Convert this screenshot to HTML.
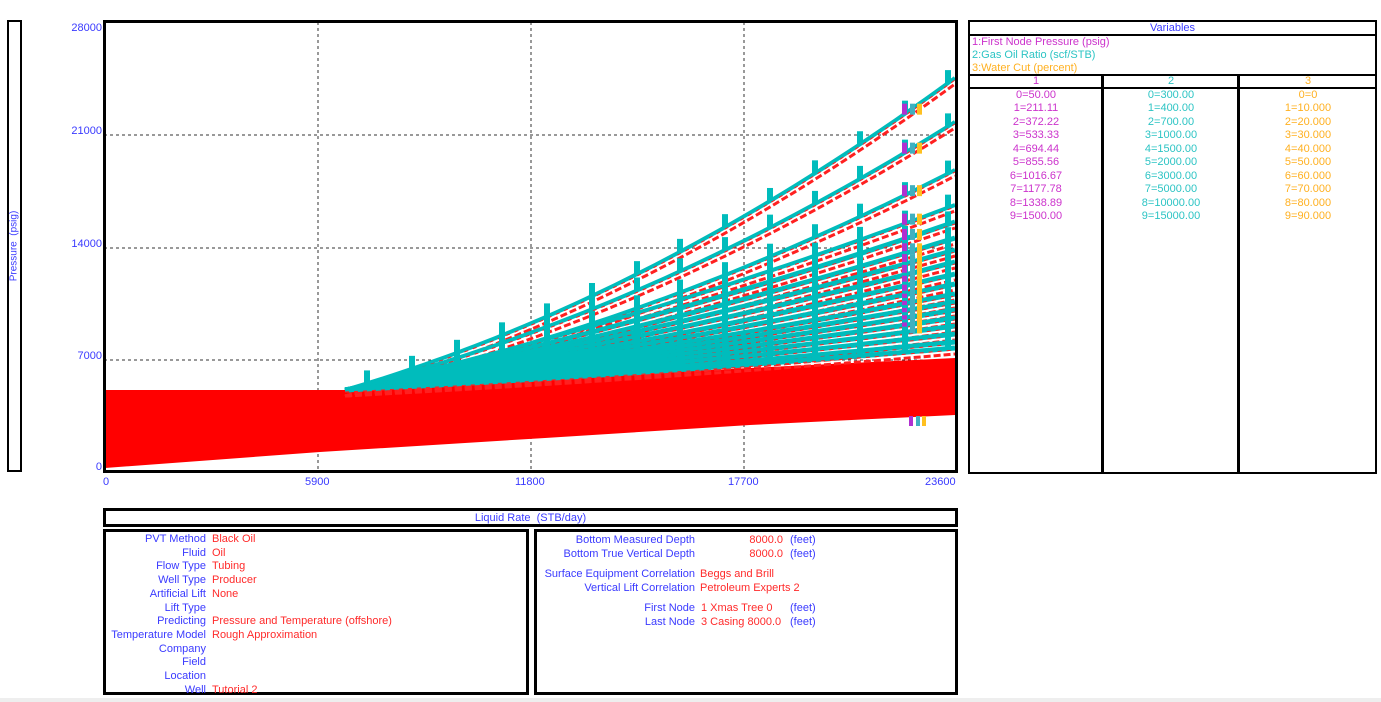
<!DOCTYPE html>
<html><head><meta charset="utf-8"><style>
body{margin:0;width:1381px;height:702px;background:#fff;overflow:hidden;font-family:"Liberation Sans",sans-serif;font-size:11px;position:relative}
.a{position:absolute}
.b{position:absolute;border:2px solid #000;box-sizing:border-box}
.bl{color:#3a3aff}.rd{color:#ff2a2a}.mg{color:#cc33cc}.cy{color:#2cc4c4}.or{color:#ffb020}
.r{text-align:right}
.row{position:absolute;white-space:nowrap;line-height:13px}
</style></head><body>
<div class="b" style="left:7px;top:20px;width:15px;height:452px"></div>
<div class="a bl" style="left:14px;top:246px;transform:translate(-50%,-50%) rotate(-90deg);white-space:nowrap;font-size:10px">Pressure &nbsp;(psig)</div>
<div class="a bl r" style="left:40px;width:62px;top:22px">28000</div>
<div class="a bl r" style="left:40px;width:62px;top:125px">21000</div>
<div class="a bl r" style="left:40px;width:62px;top:238px">14000</div>
<div class="a bl r" style="left:40px;width:62px;top:350px">7000</div>
<div class="a bl r" style="left:40px;width:62px;top:461px">0</div>
<div class="a bl" style="left:103px;top:476px">0</div>
<div class="a bl" style="left:305px;top:476px">5900</div>
<div class="a bl" style="left:515px;top:476px">11800</div>
<div class="a bl" style="left:728px;top:476px">17700</div>
<div class="a bl" style="left:925px;top:476px">23600</div>
<svg class="a" style="left:0;top:0" width="1381" height="702" id="sv">
<g stroke="#333" stroke-dasharray="3,3" stroke-width="1">
<line x1="318" y1="22" x2="318" y2="471"/><line x1="531" y1="22" x2="531" y2="471"/><line x1="744" y1="22" x2="744" y2="471"/>
<line x1="104" y1="135" x2="955" y2="135"/><line x1="104" y1="248" x2="955" y2="248"/><line x1="104" y1="360" x2="955" y2="360"/>
</g>
<polygon fill="#ff0000" points="105,390 345,390 545,378 750,368 955,358 955,415 750,425 545,438 320,452 105,468"/>
<g id="cl"></g>
<rect x="104.5" y="21.5" width="852" height="450" fill="none" stroke="#000" stroke-width="3"/>
</svg>
<script>
var g=document.getElementById('cl'),h='';
var D=[312,268,220,185,168,152,140,128,116,106,96,88,80,72,64,56,48,42];
var mk=[367,412,457,502,547,592,637,680,725,770,815,860,905,948];
function Y(d,x,i){var t=(x-345)/610;var a=i<3?0.57:0.75;return 390-a*d*t-(1-a)*d*t*t;}
function P(d,i,o){var p='';for(var x=345;x<=955;x+=10)p+=(x==345?'M':'L')+x+','+(Y(d,x,i)+o).toFixed(1);return p;}
D.forEach(function(d,i){
h+='<path d="'+P(d,i,6)+'" fill="none" stroke="#ff2020" stroke-width="3" stroke-dasharray="7,3"/>';
h+='<path d="'+P(d,i,0)+'" fill="none" stroke="#00bcbc" stroke-width="'+(i>3?5:4)+'"/>';
h+='<path d="'+P(d,i,2)+'" fill="none" stroke="#ff2020" stroke-width="1" stroke-dasharray="4,5"/>';
mk.forEach(function(x){if(x<360)return;var y=Y(d,x,i);h+='<rect x="'+(x-3)+'" y="'+(y-13)+'" width="6" height="13" fill="#00bcbc"/>';});
if(i<15){var y=Y(d,905,i)-10;h+='<rect x="902" y="'+y+'" width="5" height="11" fill="#b030d0"/><rect x="910" y="'+y+'" width="5" height="11" fill="#40b0c0"/><rect x="917" y="'+y+'" width="5" height="11" fill="#ffc020"/>';}
});
h+='<rect x="909" y="416" width="4" height="10" fill="#b030d0"/><rect x="916" y="416" width="4" height="10" fill="#40b0c0"/><rect x="922" y="416" width="4" height="10" fill="#ffc020"/>';
g.innerHTML=h;
</script>
<div class="b" style="left:968px;top:20px;width:409px;height:454px"></div>
<div class="a" style="left:968px;top:34px;width:409px;border-top:2px solid #000"></div>
<div class="a" style="left:968px;top:74px;width:409px;border-top:2px solid #000"></div>
<div class="a" style="left:968px;top:87px;width:409px;border-top:2px solid #000"></div>
<div class="a" style="left:1101px;top:75px;height:398px;border-left:3px solid #000"></div>
<div class="a" style="left:1237px;top:75px;height:398px;border-left:3px solid #000"></div>
<div class="a bl" style="left:968px;width:409px;text-align:center;top:22px">Variables</div>
<div class="row mg" style="left:972px;top:36px">1:First Node Pressure (psig)</div>
<div class="row cy" style="left:972px;top:49px">2:Gas Oil Ratio (scf/STB)</div>
<div class="row or" style="left:972px;top:62px">3:Water Cut (percent)</div>
<div class="a mg" style="left:970px;width:132px;text-align:center;top:75px;line-height:13.5px">1<br>0=50.00<br>1=211.11<br>2=372.22<br>3=533.33<br>4=694.44<br>5=855.56<br>6=1016.67<br>7=1177.78<br>8=1338.89<br>9=1500.00</div>
<div class="a cy" style="left:1104px;width:134px;text-align:center;top:75px;line-height:13.5px">2<br>0=300.00<br>1=400.00<br>2=700.00<br>3=1000.00<br>4=1500.00<br>5=2000.00<br>6=3000.00<br>7=5000.00<br>8=10000.00<br>9=15000.00</div>
<div class="a or" style="left:1240px;width:136px;text-align:center;top:75px;line-height:13.5px">3<br>0=0<br>1=10.000<br>2=20.000<br>3=30.000<br>4=40.000<br>5=50.000<br>6=60.000<br>7=70.000<br>8=80.000<br>9=90.000</div>
<div class="b" style="left:103px;top:508px;width:855px;height:19px;border-width:3px"></div>
<div class="a bl" style="left:103px;width:855px;text-align:center;top:512px">Liquid Rate &nbsp;(STB/day)</div>
<div class="b" style="left:103px;top:529px;width:426px;height:166px;border-width:3px"></div>
<div class="b" style="left:534px;top:529px;width:424px;height:166px;border-width:3px"></div>
<div class="a bl r" style="left:106px;width:100px;top:533px;line-height:13.7px">PVT Method<br>Fluid<br>Flow Type<br>Well Type<br>Artificial Lift<br>Lift Type<br>Predicting<br>Temperature Model<br>Company<br>Field<br>Location<br>Well</div>
<div class="a rd" style="left:212px;top:533px;line-height:13.7px;white-space:nowrap">Black Oil<br>Oil<br>Tubing<br>Producer<br>None<br><br>Pressure and Temperature (offshore)<br>Rough Approximation<br><br><br><br>Tutorial 2</div>
<div class="a bl r" style="left:538px;width:157px;top:534px;line-height:13.7px">Bottom Measured Depth<br>Bottom True Vertical Depth</div>
<div class="a rd r" style="left:700px;width:83px;top:534px;line-height:13.7px">8000.0<br>8000.0</div>
<div class="a bl" style="left:790px;top:534px;line-height:13.7px">(feet)<br>(feet)</div>
<div class="a bl r" style="left:538px;width:157px;top:568px;line-height:13.7px;white-space:nowrap">Surface Equipment Correlation<br>Vertical Lift Correlation</div>
<div class="a rd" style="left:700px;top:568px;line-height:13.7px">Beggs and Brill<br>Petroleum Experts 2</div>
<div class="a bl r" style="left:538px;width:157px;top:602px;line-height:13.7px">First Node<br>Last Node</div>
<div class="a rd" style="left:701px;top:602px;line-height:13.7px;white-space:nowrap">1 Xmas Tree 0<br>3 Casing 8000.0</div>
<div class="a bl" style="left:790px;top:602px;line-height:13.7px">(feet)<br>(feet)</div>
<div class="a" style="left:0;top:698px;width:1381px;height:4px;background:#eee"></div>
</body></html>
